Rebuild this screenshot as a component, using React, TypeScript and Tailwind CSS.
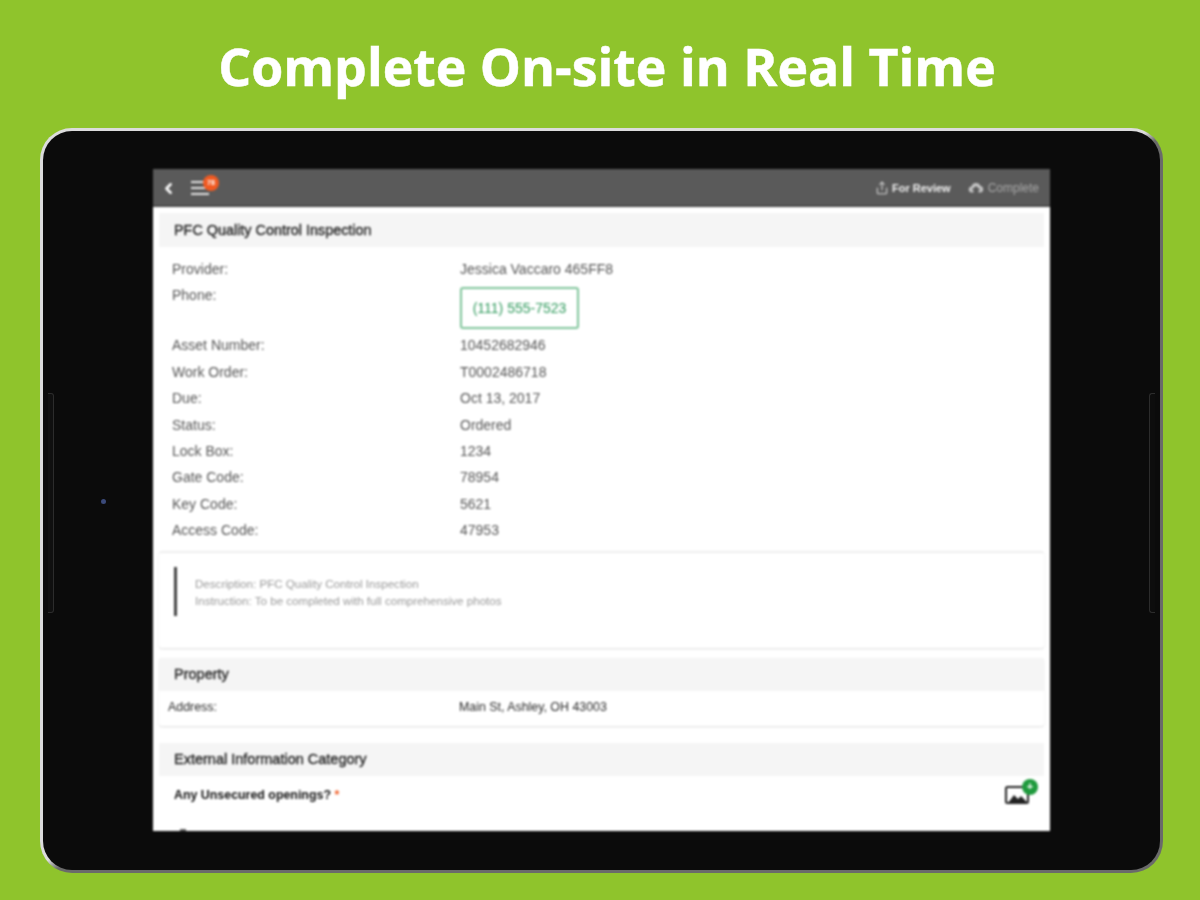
import { ChevronLeft, Share } from "lucide-react";

const details = [
  { label: "Asset Number:", value: "10452682946" },
  { label: "Work Order:", value: "T0002486718" },
  { label: "Due:", value: "Oct 13, 2017" },
  { label: "Status:", value: "Ordered" },
  { label: "Lock Box:", value: "1234" },
  { label: "Gate Code:", value: "78954" },
  { label: "Key Code:", value: "5621" },
  { label: "Access Code:", value: "47953" },
];

const App = () => {
  return (
    <div className="w-[1200px] h-[900px] overflow-hidden bg-[#8fc42c] flex flex-col items-center font-['Liberation_Sans',sans-serif]">
      {/* Title */}
      <h1 className="h-[128px] pt-[31px] text-[51.8px] leading-[70px] font-bold [-webkit-text-stroke:0.5px_#ffffff] text-white font-['Open_Sans',sans-serif] whitespace-nowrap ml-[14px]">
        Complete On-site in Real Time
      </h1>

      {/* Tablet */}
      <div className="ml-[2px] w-[1123px] h-[745px] rounded-[32px] p-[3px] bg-[linear-gradient(to_bottom_right,#dcdcdc_49.5%,#6a6a6a_50.5%)]">
        <div className="relative h-full rounded-[29px] bg-[#0b0b0b] flex justify-center pt-[38px] pl-[1px]">
          {/* Side buttons and camera */}
          <div className="absolute left-[5px] top-[262px] w-[6px] h-[220px] rounded-r-[3px] bg-[#101010] border border-l-0 border-[#2c2c2c]" />
          <div className="absolute right-[5px] top-[262px] w-[6px] h-[220px] rounded-l-[3px] bg-[#0d0d0d] border border-r-0 border-[#2c2c2c]" />
          <div className="absolute left-[58px] top-[368px] w-[5px] h-[5px] rounded-full bg-[#3b4a7a]" />

          {/* Screen */}
          <div className="w-[897px] h-[662px] bg-white overflow-hidden blur-[0.8px]">
            {/* App bar */}
            <div className="h-[38px] bg-[#5a5a5a] border-b-2 border-[#4a4a4a] flex items-center justify-between pl-[7px] pr-[11px]">
              <div className="flex items-center gap-[14px] pt-[2px]">
                <ChevronLeft className="w-[17px] h-[17px] text-white" strokeWidth={3.5} />
                <div className="relative flex flex-col gap-[4px] w-[18px]">
                  <div className="h-[2px] bg-[#e4e4e4]" />
                  <div className="h-[2px] bg-[#e4e4e4]" />
                  <div className="h-[2px] bg-[#e4e4e4]" />
                  <div className="absolute -top-[6px] left-[12px] w-[16px] h-[16px] rounded-full bg-[#f05a22] flex items-center justify-center text-[7px] font-bold text-white">
                    78
                  </div>
                </div>
              </div>
              <div className="flex items-center gap-[17px] text-[11px] pt-[2px]">
                <div className="flex items-center gap-[3px] font-bold text-[#f0f0f0]">
                  <Share className="w-[14px] h-[16px] text-[#d8d8d8]" strokeWidth={1.8} />
                  For Review
                </div>
                <div className="flex items-center gap-[4px] text-[12px] text-[#a8a8a8]">
                  <svg viewBox="0 0 16 12" className="w-[16px] h-[12px] text-[#c4c4c4]" fill="currentColor">
                    <path d="M4 10.5a3 3 0 0 1-.5-6A4.7 4.7 0 0 1 12.4 4 3.3 3.3 0 0 1 12.5 10.5h-2V8h2L8 4 3.500 8h2v2.500z" />
                  </svg>
                  Complete
                </div>
              </div>
            </div>

            <div className="px-[6px] pt-[6px]">
              {/* Inspection card */}
              <div className="rounded-[3px]">
                <div className="h-[34px] bg-[#f5f5f5] flex items-center pl-[15px] pt-[1px] text-[14.4px] text-[#2a2a2a] [-webkit-text-stroke:0.4px_#2a2a2a]">
                  PFC Quality Control Inspection
                </div>
                <div className="pt-[9px] pb-[7px] pl-[13px] text-[14px] leading-[26.4px] text-[#555555]">
                  <div className="flex">
                    <div className="w-[288px]">Provider:</div>
                    <div>Jessica Vaccaro 465FF8</div>
                  </div>
                  <div className="flex h-[50px]">
                    <div className="w-[288px]">Phone:</div>
                    <div className="mt-[5px] w-[119px] h-[42px] rounded-[3px] border-2 border-[#7fc49a] flex items-center justify-center text-[#2f9a5c]">
                      (111) 555-7523
                    </div>
                  </div>
                  {details.map((row) => (
                    <div key={row.label} className="flex">
                      <div className="w-[288px]">{row.label}</div>
                      <div>{row.value}</div>
                    </div>
                  ))}
                </div>
              </div>

              {/* Description card */}
              <div className="h-[97px] rounded-[3px] shadow-[0_1px_2px_#00000022] pt-[14px] pl-[15px] border-t-2 border-[#eeeeee] flex gap-[18px]">
                <div className="h-[49px] w-[3px] bg-[#444444]" />
                <div className="pt-[8px] text-[11.6px] leading-[17px] text-[#999999]">
                  <div>Description: PFC Quality Control Inspection</div>
                  <div>Instruction: To be completed with full comprehensive photos</div>
                </div>
              </div>

              {/* Property card */}
              <div className="mt-[10px] rounded-[3px] shadow-[0_1px_2px_#00000022]">
                <div className="h-[33px] bg-[#f5f5f5] flex items-center pl-[15px] pt-[1px] text-[14.5px] text-[#2a2a2a] [-webkit-text-stroke:0.4px_#2a2a2a]">
                  Property
                </div>
                <div className="h-[35px] flex items-center pl-[9px] pb-[1px] text-[12.4px] text-[#2a2a2a]">
                  <div className="w-[291px]">Address:</div>
                  <div>Main St, Ashley, OH 43003</div>
                </div>
              </div>

              {/* External information card */}
              <div className="relative mt-[17px]">
                <div className="h-[33px] bg-[#f5f5f5] flex items-center pl-[15px] pt-[1px] text-[14.5px] text-[#2a2a2a] [-webkit-text-stroke:0.4px_#2a2a2a]">
                  External Information Category
                </div>
                <div className="flex items-start justify-between pl-[15px] pr-[6px] pt-[10px] text-[12.4px] font-bold text-[#111111]">
                  <div>
                    Any Unsecured openings? <span className="text-[#f05a22]">*</span>
                  </div>
                  <div className="relative -mt-[1px] mr-[7px]">
                    <svg viewBox="0 0 26 20" className="w-[26px] h-[20px]">
                      <rect x="1" y="2" width="22" height="16" rx="1.500" fill="none" stroke="#222222" strokeWidth="2" />
                      <path d="M3 18l6-8 4 4 3-3 7 7z" fill="#222222" />
                    </svg>
                    <div className="absolute -top-[6px] -right-[7px] w-[16px] h-[16px] rounded-full bg-[#1f9a3d] flex items-center justify-center text-[11px] leading-none text-white">
                      +
                    </div>
                  </div>
                </div>
                {/* Next answer, cut off by the screen edge */}
                <div className="ml-[21px] mt-[24px] w-[6px] h-[2px] bg-[#666666]" />
              </div>
            </div>
          </div>
        </div>
      </div>
    </div>
  );
};

export default App;
